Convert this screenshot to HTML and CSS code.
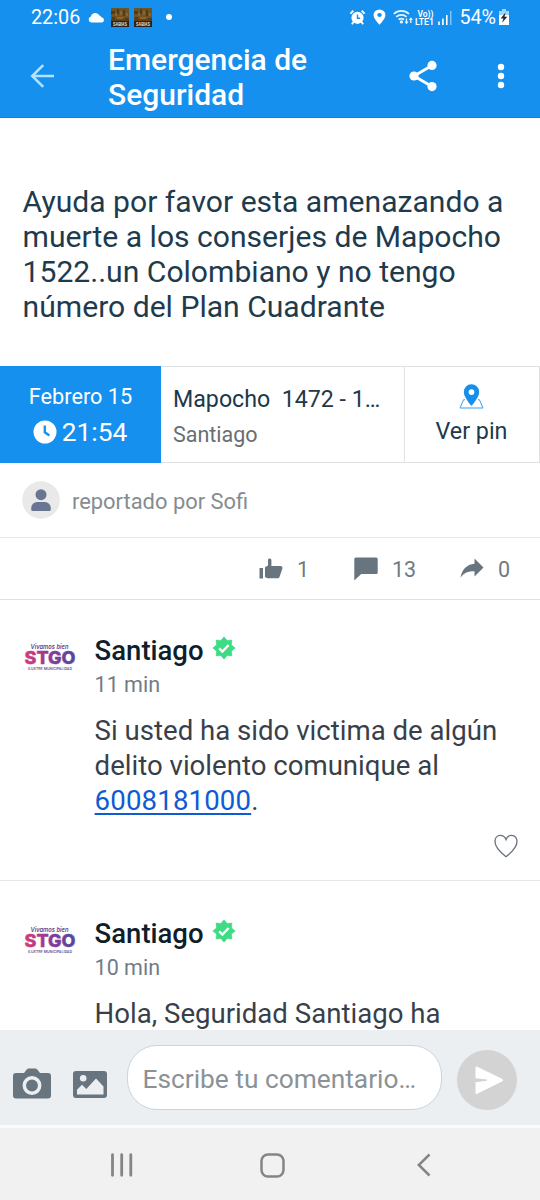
FILE: index.html
```html
<!DOCTYPE html>
<html lang="es">
<head>
<meta charset="utf-8">
<title>Emergencia de Seguridad</title>
<link rel="stylesheet" href="styles.css">
</head>
<body>
<svg class="defs" aria-hidden="true">
  <defs>
    <linearGradient id="brand" x1="0" x2="1"><stop offset="0" stop-color="#d83c78"/><stop offset=".5" stop-color="#8c3a94"/><stop offset="1" stop-color="#52489f"/></linearGradient>
    <linearGradient id="cover" x1="0" y1="0" x2="0" y2="1"><stop offset="0" stop-color="#6b5426"/><stop offset=".5" stop-color="#75511f"/><stop offset="1" stop-color="#241a14"/></linearGradient>
    <symbol id="thumb" viewBox="0 0 18 19">
      <rect width="18" height="19" fill="url(#cover)"/>
      <path d="M0 3h4v3H0zM6 1h2v5H6zM12 2h2v6h-2zM1 9h3v3H1zM14 10h4v2h-4z" fill="#4a3d23"/>
      <path d="M4 5h2v3H4zM9 3h2v4H9zM15 5h2v3h-2zM6 9h6v2H6z" fill="#8f6526"/>
      <rect y="13" width="18" height="6" fill="#2a2019"/>
      <text x="9" y="18" class="thumb-text" text-anchor="middle" textLength="14" lengthAdjust="spacingAndGlyphs">SABIAS</text>
    </symbol>
    <symbol id="brand-logo" viewBox="0 0 52 28">
      <text x="6.500" y="6" class="logo-top" textLength="38" lengthAdjust="spacingAndGlyphs">Vivamos bien</text>
      <text x="0.500" y="20.700" class="logo-main" textLength="51" lengthAdjust="spacingAndGlyphs">STGO</text>
      <text x="4" y="26.500" class="logo-sub" textLength="44" lengthAdjust="spacingAndGlyphs">ILUSTRE MUNICIPALIDAD</text>
    </symbol>
    <symbol id="verified" viewBox="-12 -12 24 24">
      <path d="M0-11.200L3.100-7.500 7.900-7.900 7.500-3.100 11.200 0 7.500 3.100 7.900 7.900 3.100 7.500 0 11.200-3.100 7.500-7.900 7.900-7.500 3.100-11.200 0-7.500-3.100-7.900-7.900-3.100-7.500z" fill="#3ddc84" stroke="#3ddc84" stroke-width=".6" stroke-linejoin="round"/>
      <path d="M-4.800.3l3.200 3.200 6.300-6.500" fill="none" stroke="#fff" stroke-width="2.400"/>
    </symbol>
  </defs>
</svg>
<div class="screen">
  <header class="top">
    <div class="status">
      <div class="status-left">
        <span class="clock">22:06</span>
        <svg class="cloud" width="17" height="11" viewBox="0 0 17 11"><path d="M3.500 10.500a3 3 0 0 1-.6-5.900A4.600 4.600 0 0 1 11.500 3.500 3.800 3.800 0 0 1 13.500 5.200 2.700 2.700 0 0 1 14 10.500z" fill="#fff"/></svg>
        <svg class="cover" width="18" height="19"><use href="#thumb"/></svg>
        <svg class="cover" width="18" height="19"><use href="#thumb"/></svg>
        <i class="dot"></i>
      </div>
      <div class="status-right">
        <svg width="17" height="17" viewBox="0 0 17 17" fill="none" stroke="#fff"><circle cx="8.500" cy="8.800" r="5.300" fill="#fff" stroke-width="1.600"/><path d="M8.500 5.500v3.700h2.700" stroke="#1590ee" stroke-width="1.400"/><path d="M1.500 4.800A9 9 0 0 1 4.400 1.700M15.500 4.800A9 9 0 0 0 12.600 1.700" stroke-width="1.900"/><path d="M4.800 12.600l-2 2.600M12.200 12.600l2 2.600" stroke-width="1.800"/></svg>
        <svg class="loc" width="13" height="16" viewBox="0 0 12 16" preserveAspectRatio="none"><path d="M6 .5A5.500 5.500 0 0 0 .5 6C.5 10 6 15.700 6 15.700S11.500 10 11.500 6A5.500 5.500 0 0 0 6 .5zM6 3.900A2.100 2.100 0 1 1 6 8.100 2.100 2.100 0 0 1 6 3.900z" fill="#fff" fill-rule="evenodd"/></svg>
        <svg class="wifi" width="21" height="16" viewBox="0 0 21 16" fill="none" stroke="#e6f5ff" stroke-width="1.700"><path d="M.8 5a11 11 0 0 1 15.200 0M3.200 7.900a7.700 7.700 0 0 1 10.400 0M5.600 10.700a4.300 4.300 0 0 1 5.500 0"/><circle cx="8.400" cy="12.900" r=".8" fill="#e6f5ff"/><path d="M13.500 9.500v5M17.800 14V9" stroke-width="1.300"/><path d="M11.500 12.500h4l-2 2.800zM15.800 11h4l-2-2.800z" fill="#e6f5ff" stroke="none"/></svg>
        <svg class="lte" width="20" height="17" viewBox="0 0 20 17"><text x="2.500" y="7.800" textLength="16" lengthAdjust="spacingAndGlyphs">Vo))</text><text x="0" y="16" textLength="19" lengthAdjust="spacingAndGlyphs">LTE1</text></svg>
        <svg class="bars" width="14" height="15" viewBox="0 0 14 15" fill="#fff"><path d="M.2 11.500h1.600V15H.2zM4.100 8.500h1.600V15H4.100zM8 5h1.600v10H8z"/><path d="M12 1h1.500v14H12z" opacity=".45"/></svg>
        <span class="pct">54%</span>
        <svg class="batt" width="10" height="16" viewBox="0 0 10 16"><path d="M3 0h4v2h3v5H0V2h3z" fill="#9fd4fb"/><path d="M0 6h10v10H0z" fill="#fff"/><path d="M6.500 3.500L1.700 9.400h2.800L3 13.800l5.300-6H5.500z" fill="#223"/></svg>
      </div>
    </div>
    <div class="bar">
      <svg class="back" width="25" height="24" viewBox="0 0 25 24" fill="none" stroke="#b5e2ff" stroke-width="2.500"><path d="M24 12H2.200M13.200 1.200L2.200 12l11 10.800"/></svg>
      <h1>Emergencia de<br>Seguridad</h1>
      <svg class="share" width="28" height="32" viewBox="0 0 28 32"><path d="M23 5.500L5 16l18 10.500" fill="none" stroke="#fff" stroke-width="2.800"/><circle cx="23" cy="5.400" r="4.600" fill="#fff"/><circle cx="5" cy="16" r="4.600" fill="#fff"/><circle cx="23" cy="26.600" r="4.600" fill="#fff"/></svg>
      <svg class="more" width="8" height="26" viewBox="0 0 8 26" fill="#fff"><circle cx="4" cy="4" r="3.200"/><circle cx="4" cy="13" r="3.200"/><circle cx="4" cy="22" r="3.200"/></svg>
    </div>
  </header>

  <main class="feed">
    <p class="message">Ayuda por favor esta amenazando a<br>muerte a los conserjes de Mapocho<br>1522..un Colombiano y no tengo<br>número del Plan Cuadrante</p>
    <section class="info">
      <div class="when">
        <div class="date">Febrero 15</div>
        <div class="time"><svg width="24" height="24" viewBox="0 0 24 24"><circle cx="12" cy="12" r="11.500" fill="#fff"/><path d="M11.800 5.500v6.800l4.600 3.200" fill="none" stroke="#1590ee" stroke-width="2.300"/></svg><span>21:54</span></div>
      </div>
      <div class="where">
        <div class="street">Mapocho&nbsp; 1472 - 1…</div>
        <div class="city">Santiago</div>
      </div>
      <div class="pin">
        <svg width="25" height="25" viewBox="0 0 25 25"><path d="M6 15.700H4.600L1 24h23l-3.600-8.300H19" fill="none" stroke="#3b9fe8" stroke-width="1"/><path d="M12.500.3A7.700 7.700 0 0 0 4.800 8c0 5.600 7.700 13.800 7.700 13.800S20.200 13.600 20.200 8A7.700 7.700 0 0 0 12.500.3zm0 4.900a2.900 2.900 0 1 1 0 5.800 2.900 2.900 0 0 1 0-5.800z" fill="#168eea" fill-rule="evenodd"/></svg>
        <span>Ver pin</span>
      </div>
    </section>
    <section class="reporter">
      <svg width="38" height="38" viewBox="0 0 38 38"><circle cx="19" cy="19" r="18.800" fill="#e9e9ea"/><circle cx="19" cy="13.700" r="5.500" fill="#6a7591"/><path d="M9.200 28.500V27a6 6 0 0 1 6-6h7.600a6 6 0 0 1 6 6v1.500a1.500 1.500 0 0 1-1.500 1.500H10.700a1.500 1.500 0 0 1-1.500-1.500z" fill="#6a7591"/></svg>
      <span>reportado por Sofi</span>
    </section>
    <section class="actions">
      <svg class="like" width="24" height="22" viewBox="0 0 24 22" fill="#68747e"><path d="M.5 10h3.500v10.500H.5zM6 9.200L9 7.500V2.200C9 .9 9.800.5 10.700.5c1.100 0 1.700.7 1.700 1.800V8H21.500A2 2 0 0 1 23.400 10.600l-2.700 7.800a2.600 2.600 0 0 1-2.400 1.900H8.500L6 19z"/></svg><span class="n1">1</span>
      <svg class="chat" width="24" height="24" viewBox="0 0 24 24" fill="#68747e"><path d="M1.800.5h20.400a1.500 1.500 0 0 1 1.500 1.500v13.500a1.500 1.500 0 0 1-1.500 1.500H7.200L.3 23.500V2A1.500 1.500 0 0 1 1.800.5z"/></svg><span class="n2">13</span>
      <svg class="fwd" width="24" height="21" viewBox="0 0 24 21" fill="#68747e"><path d="M14.500.5L23.500 9.500l-9 9v-5.300C8 13.200 4 14.500.5 19.800 1.800 12 6.500 6.300 14.500 5.700z"/></svg><span class="n3">0</span>
    </section>

    <article class="comment">
      <svg class="logo" width="52" height="28"><use href="#brand-logo"/></svg>
      <div class="content">
        <h2>Santiago <svg width="24" height="24"><use href="#verified"/></svg></h2>
        <time>11 min</time>
        <p>Si usted ha sido victima de algún<br>delito violento comunique al<br><a href="tel:6008181000">6008181000</a>.</p>
        <svg class="heart" width="24" height="24" viewBox="0 0 24 24"><path d="M12 22.700C7.800 19.500 1 13.800 1 7.600 1 4.100 3.100 1.400 6.200 1.400c2.700 0 4.800 1.300 5.800 4.200 1-2.900 3.100-4.200 5.800-4.200C20.900 1.400 23 4.100 23 7.600c0 6.200-6.800 11.900-11 15.100z" fill="none" stroke="#687080" stroke-width="1.300"/></svg>
      </div>
    </article>
    <article class="comment next">
      <svg class="logo" width="52" height="28"><use href="#brand-logo"/></svg>
      <div class="content">
        <h2>Santiago <svg width="24" height="24"><use href="#verified"/></svg></h2>
        <time>10 min</time>
        <p>Hola, Seguridad Santiago ha</p>
      </div>
    </article>
  </main>

  <footer class="composer">
    <svg class="camera" width="38" height="32" viewBox="0 0 38 32"><path d="M3 5h8l3-3.700A2 2 0 0 1 15.500.6h7a2 2 0 0 1 1.500.7L27 5h8a3 3 0 0 1 3 3v19.500a3 3 0 0 1-3 3H3a3 3 0 0 1-3-3V8a3 3 0 0 1 3-3z" fill="#68747e"/><circle cx="19" cy="17.500" r="7.700" fill="#68747e" stroke="#eceff2" stroke-width="3.500"/></svg>
    <svg class="picture" width="34" height="27" viewBox="0 0 34 27"><rect width="34" height="27" rx="3" fill="#68747e"/><circle cx="10.200" cy="7.300" r="3.300" fill="#eceff2"/><path d="M4 23.500v-4.700l5-5 4.300 4.300L23 7.500l7.500 8v8z" fill="#eceff2"/></svg>
    <div class="field">Escribe tu comentario…</div>
    <div class="send"><svg width="28" height="29" viewBox="0 0 28 29"><path d="M2.200.7L27 12.700a1.600 1.600 0 0 1 0 2.900L2.200 27.800A1.200 1.200 0 0 1 .5 26.700V16.300L12 14.800v-1.200L.5 12.200V1.800A1.200 1.200 0 0 1 2.200.7z" fill="#fff"/></svg></div>
  </footer>
  <nav class="nav">
    <svg width="22" height="24" viewBox="0 0 22 24" stroke="#858585" stroke-width="2.800" stroke-linecap="round"><path d="M1.500 1.700v20.600M10.700 1.700v20.600M19.800 1.700v20.600"/></svg>
    <svg width="25" height="25" viewBox="0 0 25 25" fill="none" stroke="#858585" stroke-width="2.500"><rect x="1.500" y="1.500" width="22" height="22" rx="6.500"/></svg>
    <svg width="14" height="24" viewBox="0 0 14 24" fill="none" stroke="#858585" stroke-width="2.500"><path d="M12.500 1.500L1.800 12l10.700 10.500"/></svg>
  </nav>
</div>
</body>
</html>
```

FILE: styles.css
```css
* { box-sizing: border-box; }
body { margin: 0; font-family: Roboto, sans-serif; background: #fff; }
svg { display: block; flex: none; }
h1, h2, p { margin: 0; }
.defs { position: absolute; width: 0; height: 0; }
.screen { width: 540px; height: 1200px; display: flex; flex-direction: column; overflow: hidden; }

.top { height: 118px; flex: none; background: #1590ee; border-bottom: 1px solid #1780d2; color: #fff; }
.status { height: 34px; display: flex; justify-content: space-between; padding: 0 31px; }
.status-left, .status-right { display: flex; align-items: center; }
.clock { font-size: 19.800px; }
.cloud { margin-left: 8px; }
.cover { margin-left: 5px; }
.cloud + .cover { margin-left: 6px; }
.dot { width: 6px; height: 6px; border-radius: 50%; background: #fff; margin-left: 14px; }
.thumb-text { font: 700 6px "Liberation Sans", sans-serif; fill: #f1e6d5; }
.loc { margin-left: 7px; }
.wifi { margin-left: 7px; }
.lte { margin-left: 1px; font: 600 9px Roboto, sans-serif; fill: #fff; }
.bars { margin-left: 3px; }
.pct { font-size: 19.700px; margin-left: 7px; }
.batt { margin-left: 3px; }
.bar { height: 83px; display: flex; align-items: center; padding: 0 35px 0 30px; }
h1 { font-size: 30px; line-height: 35px; font-weight: 500; margin-left: 53px; flex: 1; padding-top: 2px; white-space: nowrap; }
.more { margin-left: 60px; }

.feed { height: 912px; flex: none; overflow: hidden; }
.message { height: 248px; padding: 65.500px 0 0 22.600px; font-size: 30.100px; line-height: 35.200px; color: #1e3b4d; white-space: nowrap; }
.info { height: 97px; display: flex; border-top: 1px solid #e1e2e4; border-bottom: 1px solid #e1e2e4; color: #20394a; white-space: nowrap; }
.when { width: 161px; margin: -1px 0; background: #1590ee; color: #fff; display: flex; flex-direction: column; align-items: center; }
.date { font-size: 21.700px; line-height: 28px; margin-top: 17px; }
.time { display: flex; align-items: center; gap: 5px; font-size: 26.300px; line-height: 32px; margin-top: 5px; padding-right: 1px; }
.where { width: 243px; padding: 18px 0 0 12px; }
.street { font-size: 23.200px; line-height: 28px; }
.city { font-size: 21.500px; line-height: 28px; margin-top: 8px; color: #696e72; }
.pin { width: 136px; border: 1px solid #e1e2e4; border-width: 0 1px; display: flex; flex-direction: column; align-items: center; padding: 17px 1px 0 0; font-size: 23.300px; line-height: 28px; gap: 8px; }
.reporter { height: 75px; border-bottom: 1px solid #e5e6e7; padding: 0 22px; display: flex; align-items: center; gap: 12px; font-size: 21.900px; color: #858c90; }
.reporter span { padding-top: 2px; }
.actions { height: 62px; border-bottom: 1px solid #dfe0e2; display: flex; align-items: center; padding-left: 259px; font-size: 21.500px; color: #707a82; }
.actions span { padding-top: 2px; }
.n1 { width: 13px; margin-left: 14px; }
.chat { margin-left: 44px; }
.n2 { width: 26px; margin-left: 14px; }
.fwd { margin-left: 42px; }
.n3 { margin-left: 14px; }
.comment { height: 281px; border-bottom: 1px solid #e5e6e7; padding: 34px 22px 0 24px; display: flex; gap: 18.600px; }
.comment.next { padding-top: 36px; }
.logo { margin-top: 9px; }
.logo-top { font: italic 600 6.500px Inter, sans-serif; fill: #62458e; }
.logo-main { font: 800 17.500px Inter, sans-serif; fill: url(#brand); stroke: url(#brand); stroke-width: .4; }
.logo-sub { font: 600 3.500px Inter, sans-serif; fill: #6d4e91; }
.content { flex: 1; display: flex; flex-direction: column; white-space: nowrap; }
h2 { display: flex; gap: 8px; font-size: 27.500px; font-weight: 500; line-height: 34px; color: #101d2b; }
h2 svg { margin-top: 2px; }
time { font-size: 21.500px; line-height: 28px; margin-top: 3px; color: #737a87; }
.comment p { margin-top: 13.500px; font-size: 27.600px; line-height: 35.200px; color: #393f4a; }
.comment a { color: #0f5bd3; letter-spacing: .15px; text-decoration-thickness: 1.500px; text-underline-offset: 3px; }
.heart { align-self: flex-end; margin-top: 15.500px; }

.composer { height: 98px; flex: none; background: #ebeff2; border-bottom: 3px solid #fafbfc; display: flex; align-items: flex-start; padding-left: 13px; }
.camera { margin-top: 37.500px; }
.picture { margin: 41px 0 0 22px; }
.field { width: 315px; height: 65px; margin: 15px 0 0 20px; border: 1px solid #c8d4e1; border-radius: 30px; background: #fff; padding-left: 14.500px; font-size: 26.300px; line-height: 66px; color: #8b9296; white-space: nowrap; }
.send { width: 60px; height: 60px; border-radius: 50%; background: #d3d3d3; margin: 20px 0 0 15px; padding: 16px 0 0 18px; }
.nav { height: 72px; background: #f1f1f1; display: flex; align-items: center; padding: 2px 0 0 111px; }
.nav svg:nth-child(2) { margin-left: 127px; }
.nav svg:nth-child(3) { margin-left: 132px; }
```
